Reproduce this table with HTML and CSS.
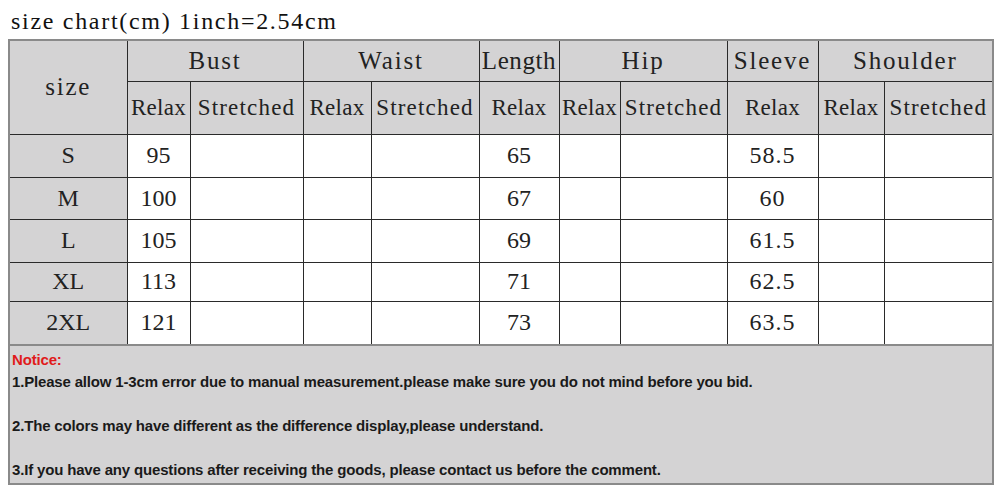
FILE: index.html
```html
<!DOCTYPE html>
<html>
<head>
<meta charset="utf-8">
<link rel="stylesheet" href="styles.css">
</head>
<body>
<div class="page">
  <div class="title">size chart(cm) 1inch=2.54cm</div>
  <table class="chart">
    <colgroup>
      <col class="c-size">
      <col class="c-br"><col class="c-bs">
      <col class="c-wr"><col class="c-ws">
      <col class="c-len">
      <col class="c-hr"><col class="c-hs">
      <col class="c-sl">
      <col class="c-sr"><col class="c-ss">
    </colgroup>
    <tr class="h1">
      <th rowspan="2" class="hsize">size</th>
      <th colspan="2">Bust</th>
      <th colspan="2">Waist</th>
      <th class="len">Length</th>
      <th colspan="2">Hip</th>
      <th>Sleeve</th>
      <th colspan="2">Shoulder</th>
    </tr>
    <tr class="h2">
      <th>Relax</th><th class="st">Stretched</th>
      <th>Relax</th><th class="st">Stretched</th>
      <th>Relax</th>
      <th>Relax</th><th class="st">Stretched</th>
      <th>Relax</th>
      <th>Relax</th><th class="st">Stretched</th>
    </tr>
    <tr class="r r1"><td class="sz">S</td><td>95</td><td></td><td></td><td></td><td>65</td><td></td><td></td><td class="dec">58.5</td><td></td><td></td></tr>
    <tr class="r r2"><td class="sz">M</td><td>100</td><td></td><td></td><td></td><td>67</td><td></td><td></td><td class="dec">60</td><td></td><td></td></tr>
    <tr class="r r3"><td class="sz">L</td><td>105</td><td></td><td></td><td></td><td>69</td><td></td><td></td><td class="dec">61.5</td><td></td><td></td></tr>
    <tr class="r r4"><td class="sz">XL</td><td>113</td><td></td><td></td><td></td><td>71</td><td></td><td></td><td class="dec">62.5</td><td></td><td></td></tr>
    <tr class="r r5"><td class="sz">2XL</td><td>121</td><td></td><td></td><td></td><td>73</td><td></td><td></td><td class="dec">63.5</td><td></td><td></td></tr>
    <tr class="notice-row">
      <td colspan="11" class="notice">
        <div class="n-title">Notice:</div>
        <div class="n-line">1.Please allow 1-3cm error due to manual measurement.please make sure you do not mind before you bid.</div>
        <div class="n-gap"></div>
        <div class="n-line">2.The colors may have different as the difference display,please understand.</div>
        <div class="n-gap"></div>
        <div class="n-line">3.If you have any questions after receiving the goods, please contact us before the comment.</div>
      </td>
    </tr>
  </table>
</div>
</body>
</html>
```
FILE: styles.css
```css
html, body {
  margin: 0;
  padding: 0;
  background: #ffffff;
}
.page {
  padding: 0 8px 0 8px;
  width: 984px;
}
.title {
  font-family: "Liberation Serif", "Times New Roman", serif;
  font-size: 24px;
  letter-spacing: 1.7px;
  color: #111;
  height: 39px;
  line-height: 42px;
  padding-left: 3px;
  box-sizing: border-box;
}
.chart {
  border-collapse: collapse;
  table-layout: fixed;
  width: 984px;
  font-family: "Liberation Serif", "Times New Roman", serif;
  color: #222;
  border: 2px solid #8a8a8a;
}
.chart th, .chart td {
  border: 1px solid #2a2a2a;
  padding: 0;
  text-align: center;
  vertical-align: middle;
  overflow: hidden;
  white-space: nowrap;
}
.c-size { width: 118px; }
.c-br { width: 63px; }
.c-bs { width: 113px; }
.c-wr { width: 68px; }
.c-ws { width: 108px; }
.c-len { width: 80px; }
.c-hr { width: 61px; }
.c-hs { width: 107px; }
.c-sl { width: 91px; }
.c-sr { width: 66px; }
.c-ss { width: 109px; }

.chart th {
  background: #d4d3d4;
  font-weight: normal;
}
.h1 { height: 41px; }
.h1 th { font-size: 25px; letter-spacing: 1.8px; }
.h1 th.len { letter-spacing: 0.6px; }
.hsize { font-size: 25px; letter-spacing: 1.8px; }
.h2 { height: 53px; }
.h2 th { font-size: 23px; letter-spacing: 0.3px; }
.h2 th.st { letter-spacing: 1.2px; }
.chart td { font-size: 24px; background: #ffffff; }
.chart td.dec { letter-spacing: 1px; }
.chart td.sz { background: #d4d3d4; }
.r1 { height: 43px; }
.r2 { height: 42px; }
.r3 { height: 43px; }
.r4 { height: 39px; }
.r5 { height: 44px; }
.chart td.notice {
  background: #d4d3d4;
  text-align: left;
  vertical-align: top;
  font-family: "Liberation Sans", Arial, sans-serif;
  font-weight: bold;
  font-size: 15px;
  letter-spacing: -0.17px;
  line-height: 22px;
  color: #1a1a1a;
  padding: 3px 0 2px 2px;
  height: 132px;
  border: 2px solid #8a8a8a;
}
.n-title { color: #e01b1b; }
.n-gap { height: 22px; }
```
